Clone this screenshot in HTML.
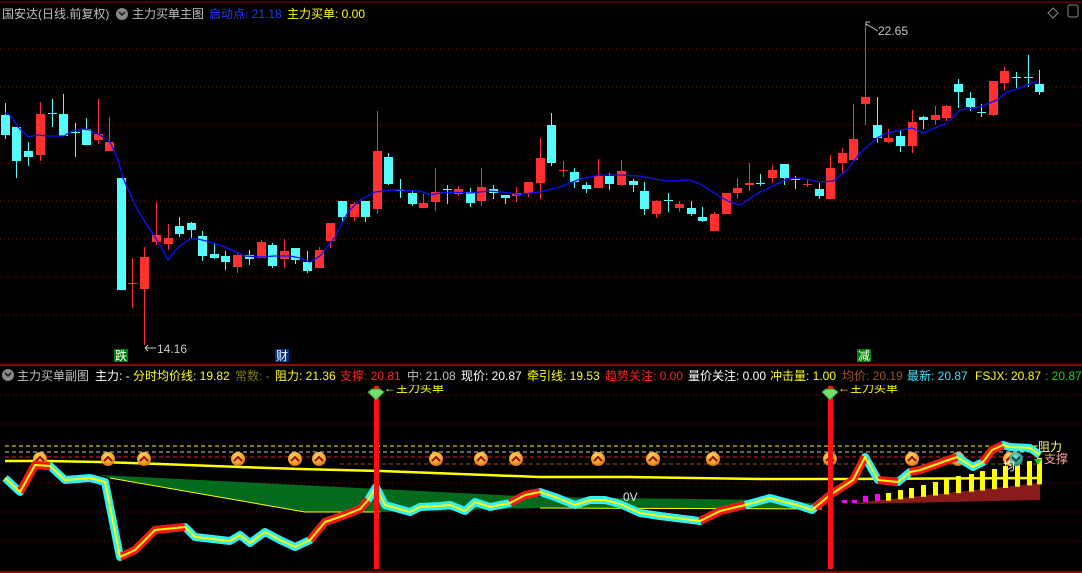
<!DOCTYPE html>
<html><head><meta charset="utf-8"><style>
html,body{margin:0;padding:0;background:#000;width:1082px;height:573px;overflow:hidden}
svg{display:block}
text{font-family:"Liberation Sans","Noto Sans CJK SC",sans-serif;font-size:12px}
</style></head><body>
<svg id="s" width="1082" height="573" viewBox="0 0 1082 573" xmlns="http://www.w3.org/2000/svg">
<defs>
<radialGradient id="cg" cx="0.45" cy="0.35" r="0.7"><stop offset="0" stop-color="#ffe070"/><stop offset="0.6" stop-color="#f5a623"/><stop offset="1" stop-color="#d06010"/></radialGradient>
<radialGradient id="tg" cx="0.45" cy="0.35" r="0.7"><stop offset="0" stop-color="#7fe0d0"/><stop offset="1" stop-color="#1a7a70"/></radialGradient>
<clipPath id="lc"><rect x="0" y="385" width="1082" height="188"/></clipPath>
</defs>
<rect width="1082" height="573" fill="#000"/>
<line x1="0" y1="2" x2="1082" y2="2" stroke="#8b0000" stroke-width="1"/>
<g id="grid" stroke="#7a1010" stroke-width="1" stroke-dasharray="1,3"></g>
<g id="candles"></g>
<polyline fill="none" stroke="#1010ff" stroke-width="1.3" points="5,113 10,115 18,127 28,137 37,135 48,136 64,136 72,131 82,129 90,130 100,135 110,142 118,160 123,178 135,205 145,222 160,245 168,260 178,247 190,239 198,239 210,242 225,247 245,256 260,257 275,256 290,256 300,258 310,262 320,256 335,237 348,212 360,200 375,192 393,190 400,190 420,191 430,195 440,193 450,192 470,193 490,191 510,193 520,195 530,193 540,192 560,187 580,179 600,175 620,175 640,176 660,180 670,181 690,180 700,184 710,190 720,197 730,202 740,205 760,192 787,179 800,178 820,182 833,181 847,170 860,153 877,138 887,133 912,128 923,133 947,123 960,110 980,107 997,100 1007,92 1020,88 1037,81"/>
<!-- labels main -->
<text x="878" y="35" fill="#c8c8c8">22.65</text>
<path d="M866 24 L878 31" stroke="#c8c8c8" fill="none"/><path d="M866 22 l4 0 M866 22 l0 4" stroke="#c8c8c8"/>
<text x="157" y="353" fill="#c8c8c8">14.16</text>
<path d="M145 348 L156 348 M145 348 l3 -3 M145 348 l3 3" stroke="#c8c8c8" fill="none"/>
<rect x="114" y="349" width="14" height="13" fill="#008000"/><text x="115" y="360" fill="#fff">跌</text>
<rect x="275" y="349" width="14" height="13" fill="#003080"/><text x="276" y="360" fill="#fff">财</text>
<rect x="857" y="349" width="14" height="13" fill="#008000"/><text x="858" y="360" fill="#fff">减</text>
<path d="M1053 8 l5 5 l-5 5 l-5 -5z" stroke="#888" fill="none"/>
<rect x="1068" y="5" width="10" height="12" rx="2" stroke="#888" fill="none"/>
<!-- header 1 -->
<text x="2" y="18" fill="#c0c0c0">国安达(日线.前复权)</text>
<circle cx="122" cy="14" r="6" fill="#888"/><path d="M119 12 l3 3 l3 -3" stroke="#222" stroke-width="1.6" fill="none"/>
<text x="132" y="18" fill="#c0c0c0">主力买单主图</text>
<text x="209" y="18" fill="#1e3cff">启动点: 21.18</text>
<text x="287" y="18" fill="#ffff00">主力买单: 0.00</text>
<!-- separator -->
<line x1="0" y1="365" x2="1082" y2="365" stroke="#c00000" stroke-width="1.5"/>
<line x1="0" y1="572" x2="1082" y2="572" stroke="#c00000" stroke-width="1.5"/>
<circle cx="8" cy="375" r="6" fill="#888"/><path d="M5 373 l3 3 l3 -3" stroke="#222" stroke-width="1.6" fill="none"/>
<text x="17" y="380" fill="#c0c0c0">主力买单副图</text>
<text x="95" y="380" fill="#fff">主力: -</text>
<text x="133" y="380" fill="#ffff00">分时均价线: 19.82</text>
<text x="235" y="380" fill="#808000">常数: -</text>
<text x="275" y="380" fill="#ffff00">阻力: 21.36</text>
<text x="340" y="380" fill="#ff2020">支撑: 20.81</text>
<text x="407" y="380" fill="#c0c0c0">中: 21.08</text>
<text x="461" y="380" fill="#fff">现价: 20.87</text>
<text x="527" y="380" fill="#ffff00">牵引线: 19.53</text>
<text x="605" y="380" fill="#ff2020">趋势关注: 0.00</text>
<text x="688" y="380" fill="#fff">量价关注: 0.00</text>
<text x="770" y="380" fill="#ffff00">冲击量: 1.00</text>
<text x="842" y="380" fill="#a0522d">均价: 20.19</text>
<text x="907" y="380" fill="#40e0ff">最新: 20.87</text>
<text x="975" y="380" fill="#ffff00">FSJX: 20.87</text>
<text x="1045" y="380" fill="#20d020">: 20.87</text>
<!-- lower panel -->
<g clip-path="url(#lc)">
<g stroke="#7a1010" stroke-dasharray="1,3"><line x1="0" y1="395" x2="1082" y2="395"/><line x1="0" y1="424" x2="1082" y2="424"/><line x1="0" y1="483" x2="1082" y2="483"/><line x1="0" y1="512" x2="1082" y2="512"/><line x1="0" y1="541" x2="1082" y2="541"/></g>
<line x1="5" y1="446" x2="1040" y2="446" stroke="#ffff00" stroke-dasharray="4,3"/>
<line x1="5" y1="452" x2="1040" y2="452" stroke="#c8c8c8" stroke-dasharray="4,3"/>
<line x1="5" y1="457" x2="1040" y2="457" stroke="#e02020" stroke-dasharray="4,3"/>
<line x1="340" y1="464" x2="1040" y2="464" stroke="#a05010" stroke-dasharray="4,3"/>
<polygon fill="#046a1c" points="100,475 540,497 770,500 822,504 822,509 540,508 380,512 305,512 110,478"/>
<polyline fill="none" stroke="#ffff00" stroke-width="1" points="110,478 305,512 380,512"/>
<polyline fill="none" stroke="#ffff00" stroke-width="1" points="540,508 822,509"/>
<polyline fill="none" stroke="#ffff00" stroke-width="2.5" points="5,461 45,461 100,462 160,464 240,467 300,469 380,471 460,474 540,477 630,477 760,479 853,479 1040,478"/>
<polygon fill="#8b1a1a" points="855,503 1040,483 1040,500 855,504"/>
<g id="bars" fill="#ffff00"></g>
<g fill="#ff00ff"><rect x="842" y="500" width="5" height="3"/><rect x="852" y="500" width="5" height="3"/><rect x="863" y="496" width="5" height="6"/><rect x="875" y="494" width="5" height="7"/></g>
<g id="coins"></g>
<polyline id="ml" fill="none" stroke="#30f0f0" stroke-width="8" stroke-linejoin="round" points="5,478 20,492 35,465 50,466 65,480 90,478 105,482 120,557 135,550 155,530 185,527 195,537 230,541 240,535 250,543 265,532 280,540 295,547 310,540 325,522 345,515 360,509 368,500 376,487 385,505 410,512 420,507 440,506 450,505 465,511 475,502 490,507 510,503 525,495 540,492 555,497 575,505 590,500 605,500 620,504 640,513 660,516 700,521 720,511 745,505 770,498 800,506 812,510 830,495 853,480 865,457 878,480 898,482 910,472 920,470 957,457 973,467 983,462 992,450 1003,445 1010,447 1030,448 1040,455"/>
<g fill="none" stroke="#ff1010" stroke-width="8" stroke-linejoin="round">
<polyline points="20,492 35,465 50,466"/><polyline points="120,557 135,550 155,530 185,527"/><polyline points="310,540 325,522 345,515 360,509 368,500"/><polyline points="510,503 525,495 540,492"/><polyline points="700,521 720,511 745,505"/><polyline points="815,508 830,495 853,480 865,457"/><polyline points="878,480 898,482"/><polyline points="910,472 920,470 957,457"/><polyline points="983,462 992,450 1003,445"/>
</g>
<polyline fill="none" stroke="#ffff00" stroke-width="2" stroke-linejoin="round" points="5,478 20,492 35,465 50,466 65,480 90,478 105,482 120,557 135,550 155,530 185,527 195,537 230,541 240,535 250,543 265,532 280,540 295,547 310,540 325,522 345,515 360,509 368,500 376,487 385,505 410,512 420,507 440,506 450,505 465,511 475,502 490,507 510,503 525,495 540,492 555,497 575,505 590,500 605,500 620,504 640,513 660,516 700,521 720,511 745,505 770,498 800,506 812,510 830,495 853,480 865,457 878,480 898,482 910,472 920,470 957,457 973,467 983,462 992,450 1003,445 1010,447 1030,448 1040,455"/>
<rect x="374" y="386" width="5" height="183" fill="#ff1010"/>
<rect x="828" y="386" width="5" height="183" fill="#ff1010"/>
<path d="M368 392 l4 -3 h8 l4 3 l-8 8z" fill="#6fe070" stroke="#3a9a3a"/>
<path d="M822 392 l4 -3 h8 l4 3 l-8 8z" fill="#6fe070" stroke="#3a9a3a"/>
<text x="384" y="392" fill="#ffff00">←主力买单</text>
<text x="838" y="392" fill="#ffff00">←主力买单</text>
<text x="623" y="501" fill="#e0e0e0" font-size="11">0V</text>
<circle cx="1016" cy="459" r="7" fill="url(#tg)"/><path d="M1012 457 l4 4 l4 -4" stroke="#0a4a40" stroke-width="2" fill="none"/>
<text x="1003" y="470" fill="#fff">均</text>
<path d="M1034 459 h8 l-4 6z" fill="#20c020"/>
<text x="1038" y="451" fill="#ffff80">阻力</text>
<text x="1044" y="463" fill="#ffa0a0">支撑</text>
</g>
</svg>
<script>
var N="http://www.w3.org/2000/svg";
function el(p,t,a){var e=document.createElementNS(N,t);for(var k in a)e.setAttribute(k,a[k]);p.appendChild(e);return e;}
var g=document.getElementById('grid');
[49,87,125,163,201,239,277,315].forEach(function(y){el(g,'line',{x1:0,y1:y,x2:1082,y2:y});});
var C=[[1,115,135,103,139,'c'],[12,127,161,127,178,'c'],[24,151,157,142,166,'c'],[36,114,155,102,161,'r'],[48,113,113,99,127,'c'],[59,114,136,94,136,'c'],[71,132,132,123,157,'c'],[82,129,145,118,145,'c'],[94,134,140,99,144,'r'],[105,142,151,117,150,'r'],[117,178,290,178,290,'c'],[128,283,283,258,308,'r'],[140,257,289,247,345,'r'],[152,235,242,202,245,'r'],[164,238,244,224,250,'r'],[175,226,234,217,237,'c'],[187,223,230,222,238,'c'],[198,236,256,231,261,'c'],[210,254,258,244,259,'c'],[221,256,262,251,270,'c'],[233,255,267,253,273,'r'],[245,255,259,250,265,'c'],[257,242,258,240,258,'r'],[268,245,266,243,268,'c'],[280,251,259,239,268,'r'],[291,248,260,248,264,'c'],[303,262,271,251,273,'c'],[315,250,268,247,268,'r'],[326,223,241,223,248,'r'],[338,201,217,201,223,'c'],[350,204,217,202,221,'r'],[361,201,217,201,222,'c'],[373,151,209,111,214,'r'],[384,157,184,153,185,'c'],[396,190,190,179,198,'c'],[408,193,204,190,206,'c'],[419,203,208,194,208,'r'],[431,192,202,168,211,'r'],[443,189,189,185,204,'c'],[454,189,194,186,196,'r'],[466,192,203,188,207,'c'],[477,187,201,168,206,'r'],[489,189,193,185,199,'c'],[501,195,198,195,204,'c'],[512,193,196,187,202,'r'],[524,182,193,182,197,'r'],[536,158,183,138,199,'r'],[547,125,163,113,166,'c'],[559,170,170,161,177,'r'],[570,172,182,168,188,'c'],[582,185,189,182,193,'c'],[594,176,188,159,188,'r'],[605,176,184,173,190,'c'],[617,171,185,160,186,'r'],[629,181,185,179,192,'c'],[640,191,209,182,215,'c'],[652,201,214,200,218,'r'],[664,200,200,193,212,'c'],[675,204,208,201,212,'r'],[687,208,214,201,216,'c'],[698,217,221,207,222,'c'],[710,214,231,212,231,'r'],[722,193,214,193,214,'r'],[733,188,193,178,199,'r'],[745,183,185,163,191,'r'],[756,183,183,174,186,'c'],[768,170,178,165,183,'r'],[780,164,178,164,185,'c'],[791,179,179,176,189,'c'],[803,184,184,180,187,'r'],[815,189,196,183,199,'c'],[826,168,199,155,199,'r'],[838,153,163,148,173,'r'],[849,139,160,104,160,'r'],[861,97,104,26,125,'r'],[873,125,138,97,143,'c'],[884,138,142,129,143,'r'],[896,136,146,130,152,'c'],[908,122,146,110,153,'r'],[919,117,120,116,129,'c'],[931,115,120,106,125,'r'],[942,106,118,105,121,'r'],[954,84,92,79,108,'c'],[966,98,107,92,111,'c'],[977,112,112,104,117,'c'],[989,81,115,81,116,'r'],[1000,71,83,67,90,'r'],[1012,77,77,72,88,'c'],[1024,77,77,55,87,'c'],[1035,84,92,70,95,'c']];
var cg=document.getElementById('candles');
C.forEach(function(c){var col=c[5]=='r'?'#ff3030':'#54fcfc';var cx=c[0]+4.5;
el(cg,'rect',{x:cx-0.5,y:c[3],width:1,height:Math.max(1,c[4]-c[3]),fill:col});
var h=c[2]-c[1];el(cg,'rect',{x:c[0],y:c[1],width:9,height:Math.max(1,h),fill:col});});
var b=document.getElementById('bars');
var BX=[886,898,909,921,933,944,956,969,980,992,1003,1015,1027,1037],BT=[493,490,488,485,482,479,476,474,471,469,466,463,461,458];
BX.forEach(function(x,i){var base=503-(x-855)*20/185;el(b,'rect',{x:x,y:BT[i],width:5,height:base-BT[i]+1});});
var co=document.getElementById('coins');
[40,108,144,238,295,319,436,481,516,598,653,713,830,912,958,1010].forEach(function(x){
el(co,'circle',{cx:x,cy:459,r:7,fill:'url(#cg)'});
el(co,'path',{d:'M'+(x-4)+' 461 l4 -4 l4 4',stroke:'#a01010','stroke-width':2.2,fill:'none'});});
</script>
</body></html>
